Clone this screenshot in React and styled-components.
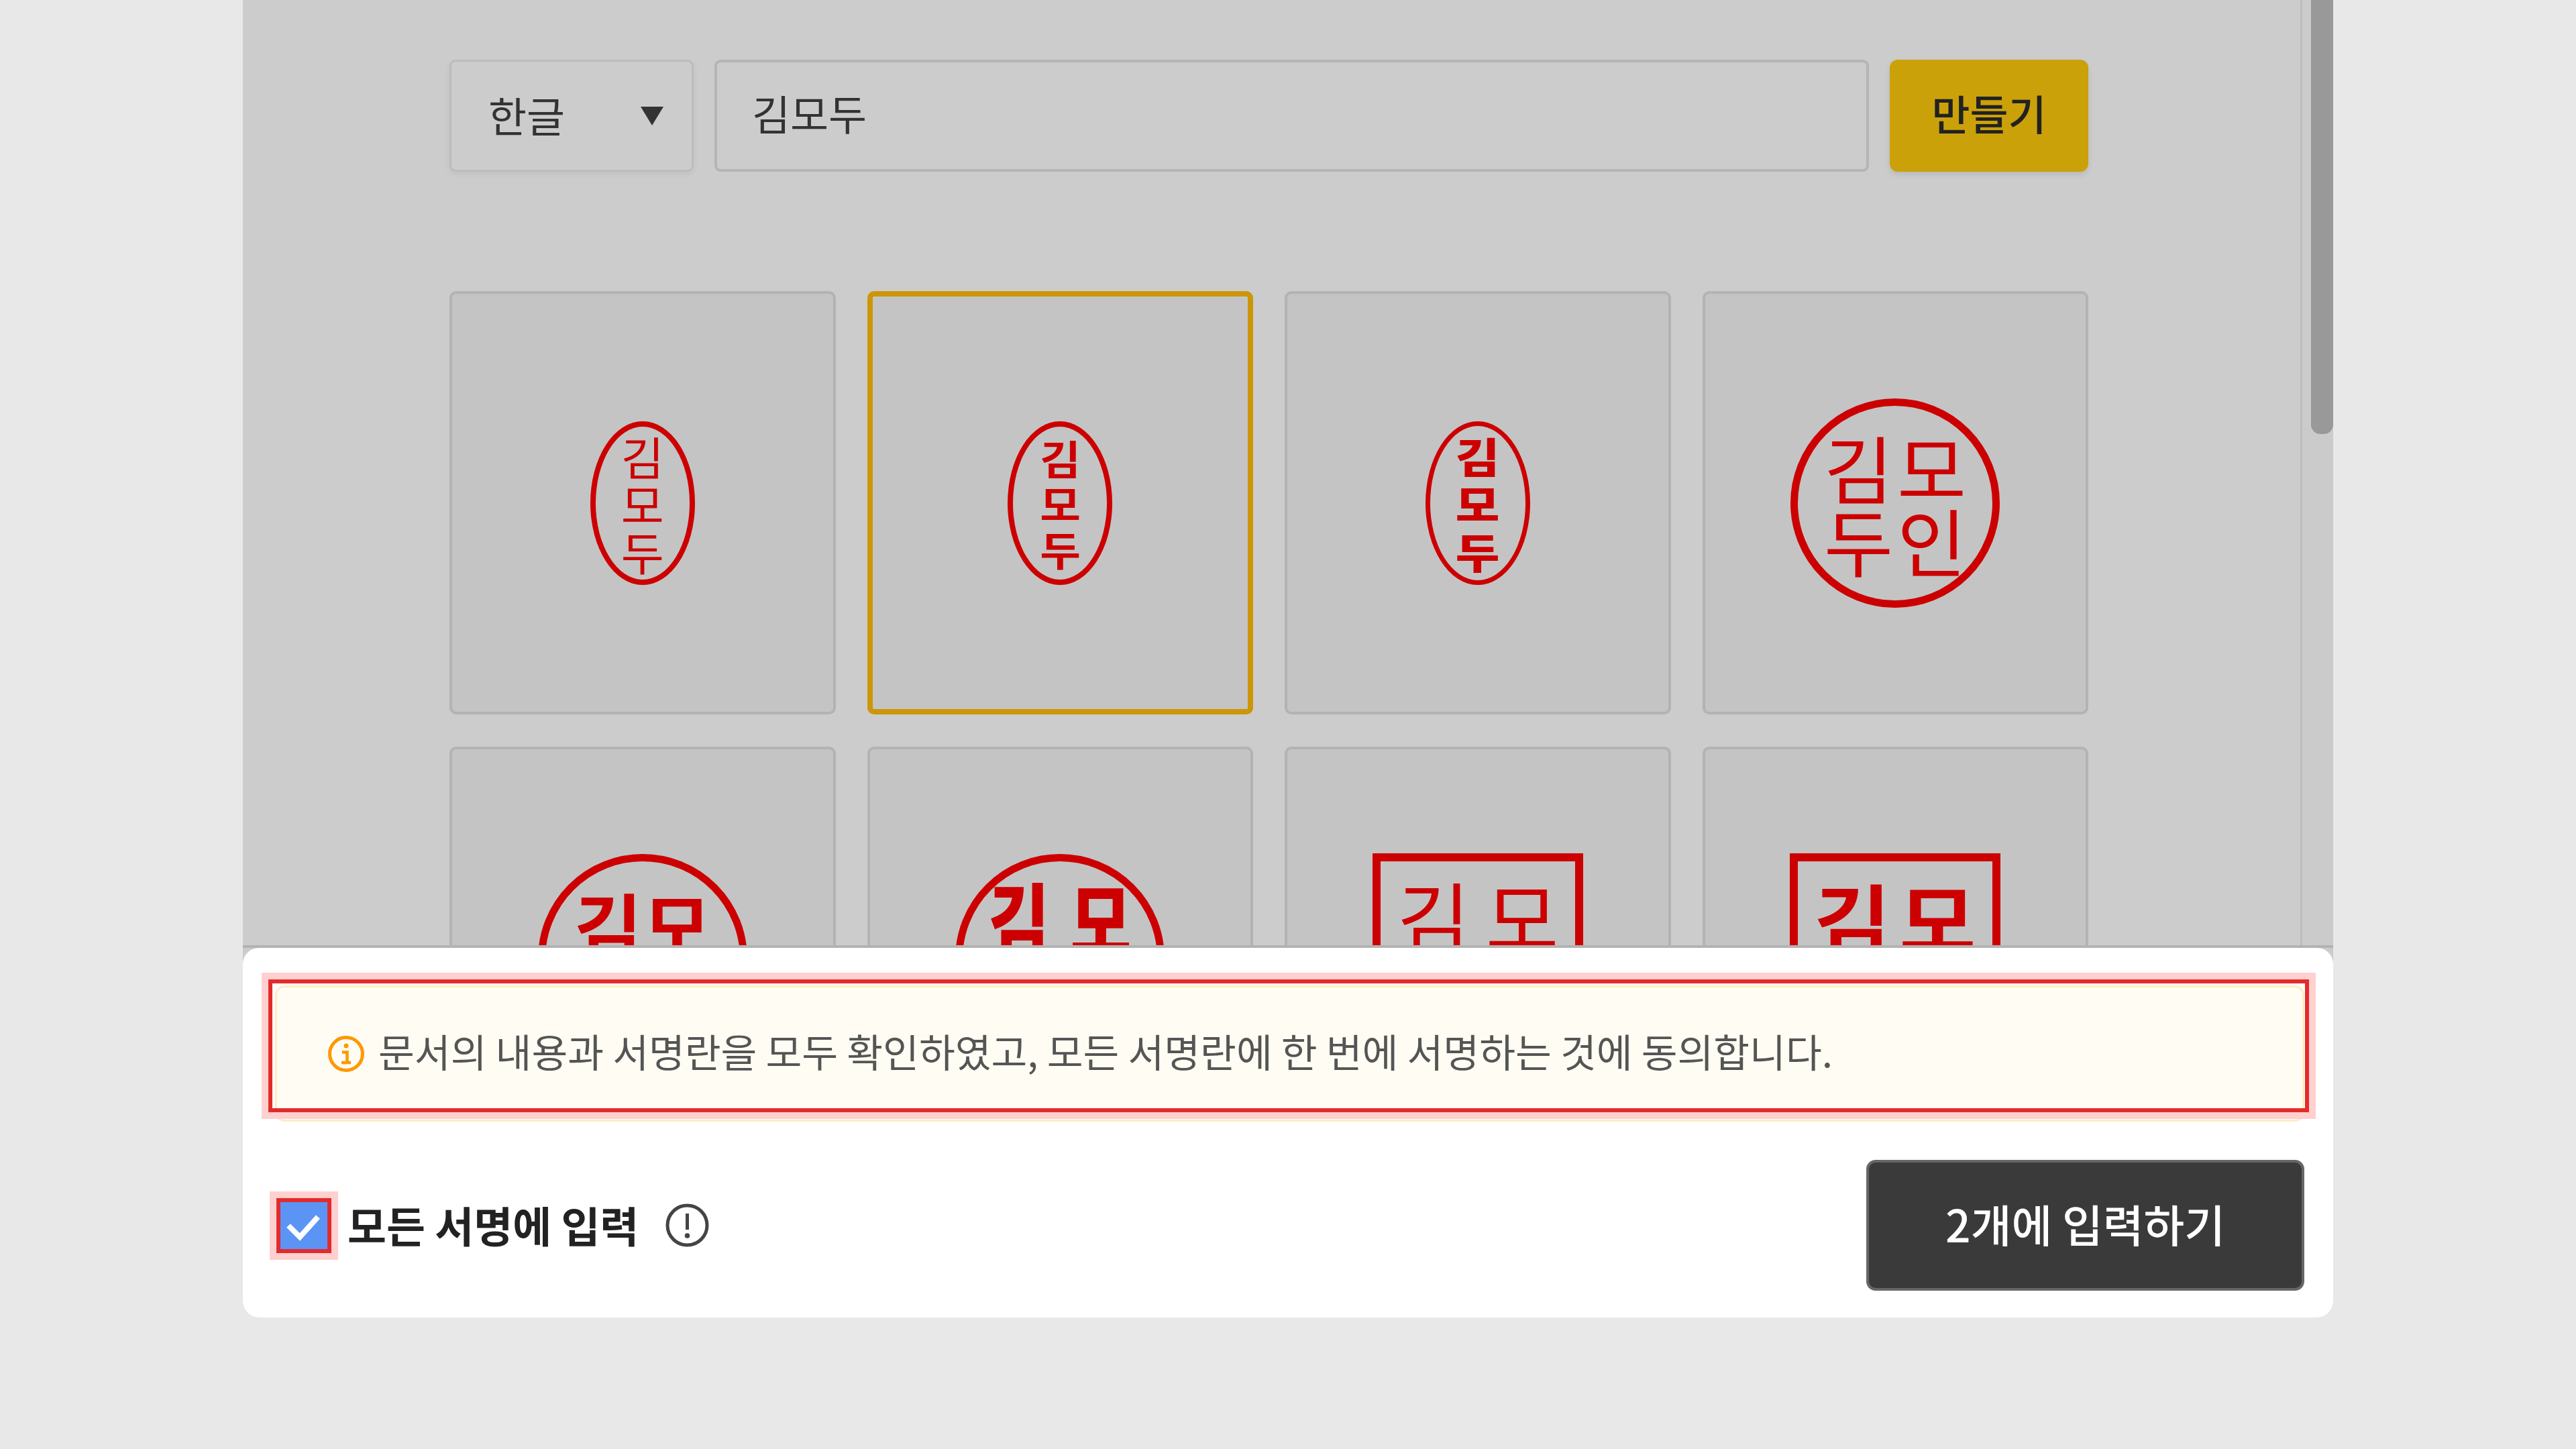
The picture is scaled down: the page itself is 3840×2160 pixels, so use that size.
import React from 'react';
import styled, {createGlobalStyle} from 'styled-components';

const GlobalStyle = createGlobalStyle`
  html, body {
    margin: 0;
    padding: 0;
    background: #e8e8e8;
  }
  * {
    box-sizing: border-box;
  }
  body {
    font-family: "Noto Sans CJK KR", "Noto Sans", sans-serif;
  }
`;

const Page = styled.div`
  width: 3840px;
  height: 2160px;
  background: #e8e8e8;
  overflow: hidden;
`;

const Dialog = styled.div`
  width: 3116px;
  height: 1964px;
  margin: 0 auto;
  display: flex;
  flex-direction: column;
`;

const Upper = styled.div`
  height: 1413px;
  flex: none;
  display: flex;
  background: #cccccc;
  border-bottom: 4px solid #b3b3b3;
  overflow: hidden;
`;

const Content = styled.div`
  flex: 1;
  min-width: 0;
  padding: 89px 316px 0 308px;
`;

const Track = styled.div`
  width: 49px;
  flex: none;
  display: flex;
  justify-content: flex-end;
  background: #cbcbcb;
  border-left: 3px solid #bdbdbd;
`;

const Thumb = styled.div`
  width: 33px;
  height: 647px;
  background: #999999;
  border-radius: 0 0 14px 14px;
`;

const Toolbar = styled.div`
  display: flex;
  gap: 31px;
  height: 167px;
`;

const Select = styled.div`
  width: 364px;
  flex: none;
  display: flex;
  align-items: center;
  justify-content: space-between;
  padding: 0 42px 0 55px;
  border: 3px solid #bcbcbc;
  border-radius: 9px;
  box-shadow: 0 4px 8px rgba(0, 0, 0, 0.06);
  color: #333333;
  font-size: 62px;
`;

const SelectLabel = styled.span`
  padding-bottom: 4px;
`;

const Caret = styled.span`
  width: 0;
  height: 0;
  border-left: 17px solid transparent;
  border-right: 17px solid transparent;
  border-top: 28px solid #333333;
`;

const NameInput = styled.input`
  flex: 1;
  min-width: 0;
  padding: 0 0 10px 52px;
  border: 4px solid #b5b5b5;
  border-radius: 9px;
  background: transparent;
  color: #333333;
  font-family: inherit;
  font-size: 62px;
  outline: none;
`;

const MakeButton = styled.button`
  width: 296px;
  flex: none;
  padding: 0 0 10px;
  border: none;
  border-radius: 12px;
  background: #cba10a;
  box-shadow: 0 4px 8px rgba(0, 0, 0, 0.1);
  color: #222222;
  font-family: inherit;
  font-size: 62px;
  font-weight: 500;
`;

const Grid = styled.div`
  margin-top: 178px;
  display: grid;
  grid-template-columns: repeat(4, 1fr);
  column-gap: 47px;
  row-gap: 48px;
`;

const Card = styled.div`
  height: 631px;
  display: flex;
  align-items: center;
  justify-content: center;
  background: #c4c4c4;
  border: ${props => (props.$selected ? '8px solid #cc9608' : '4px solid #b3b3b3')};
  border-radius: 10px;
`;

const shapes = {
  oval: 'width: 156px; height: 244px; border-radius: 50%;',
  circle: 'width: 312px; height: 312px; border-radius: 50%;',
  square: 'width: 314px; height: 314px;'
};

const Seal = styled.div`
  ${props => shapes[props.$shape]}
  flex: none;
  display: flex;
  align-items: center;
  justify-content: center;
  border: ${props => props.$stroke}px solid #cc0000;
  color: #cc0000;
`;

const Stack = styled.div`
  display: flex;
  flex-direction: column;
  align-items: center;
  gap: ${props => props.$gap}px;
`;

const Block = styled.div`
  display: grid;
  grid-template-columns: repeat(2, ${props => props.$cell}px);
  grid-template-rows: repeat(2, ${props => props.$cell}px);
  gap: ${props => props.$gap}px;
`;

const Glyph = styled.span`
  display: flex;
  align-items: center;
  justify-content: center;
  height: ${props => props.$height}px;
  font-size: ${props => props.$size}px;
  font-weight: ${props => props.$weight};
  line-height: 1;
  transform: scale(${props => props.$sx}, ${props => props.$sy});
`;

const BottomWrap = styled.div`
  flex: 1;
  min-height: 0;
  background: #cccccc;
  border-radius: 0 0 24px 24px;
`;

const Panel = styled.div`
  height: 100%;
  padding: 56px 43px 0 48px;
  background: #ffffff;
  border-radius: 24px;
`;

const NoticeWrap = styled.div`
  position: relative;
`;

const Notice = styled.div`
  height: 203px;
  display: flex;
  align-items: center;
  gap: 21px;
  padding: 0 0 0 76px;
  background: #fffdf3;
  border: 3px solid #fdecc8;
  border-radius: 14px;
  color: #555555;
  font-size: 58.5px;
`;

const NoticeText = styled.span`
  padding-bottom: 11px;
`;

const Highlight = styled.div`
  position: absolute;
  top: -9px;
  left: -10px;
  right: -7px;
  bottom: 14px;
  border: 6px solid #e32b2b;
  box-shadow: 0 0 0 10px #ffd0d0;
  pointer-events: none;
`;

const BottomRow = styled.div`
  margin-top: 57px;
  display: flex;
  align-items: center;
  justify-content: space-between;
`;

const AllSign = styled.label`
  display: flex;
  align-items: center;
  padding-left: 8px;
`;

const CheckBox = styled.span`
  width: 70px;
  height: 70px;
  flex: none;
  background: #5b94f5;
  box-shadow: 0 0 0 6px #e32b2b, 0 0 0 16px #ffd0d0;
`;

const AllSignText = styled.span`
  margin: 0 40px 0 30px;
  padding-bottom: 4px;
  color: #222222;
  font-size: 63px;
  font-weight: 700;
`;

const ApplyButton = styled.button`
  width: 653px;
  height: 195px;
  padding: 0 0 8px;
  background: #3a3a3a;
  border: 4px solid #666666;
  border-radius: 14px;
  color: #ffffff;
  font-family: inherit;
  font-size: 66px;
  font-weight: 500;
`;

const InfoIcon = () => (
  <svg width="54" height="54" viewBox="0 0 54 54" fill="none" style={{flex: 'none'}}>
    <circle cx="27" cy="27" r="24.5" stroke="#ff9800" strokeWidth="5" />
    <circle cx="27" cy="15" r="3.5" fill="#ff9800" />
    <path d="M21 24.5h7.5V39M20 40h14" stroke="#ff9800" strokeWidth="4.5" />
  </svg>
);

const AlertIcon = () => (
  <svg width="65" height="65" viewBox="0 0 65 65" fill="none">
    <circle cx="32.5" cy="32.5" r="29.5" stroke="#444444" strokeWidth="5" />
    <path d="M32.5 15v24" stroke="#444444" strokeWidth="5" />
    <circle cx="32.5" cy="48" r="3.8" fill="#444444" />
  </svg>
);

const CheckIcon = () => (
  <svg width="70" height="70" viewBox="0 0 70 70" fill="none" style={{display: 'block'}}>
    <path d="M12 35L29 52L56 22" stroke="#ffffff" strokeWidth="8" />
  </svg>
);

const NAME = ['김', '모', '두'];
const FOUR = ['김', '모', '두', '인'];
// lower half of these sits under the bottom panel
const TOP_ROW = ['김', '모'];

const seals = [
  {shape: 'oval', stroke: 8, layout: 'stack', chars: NAME, size: 58, weight: 400, sx: 1.2, sy: 1.18, height: 63, gap: 8},
  {shape: 'oval', stroke: 8, layout: 'stack', chars: NAME, size: 60, weight: 700, sx: 1.1, sy: 1, height: 58, gap: 10},
  {shape: 'oval', stroke: 7, layout: 'stack', chars: NAME, size: 62, weight: 900, sx: 1.15, sy: 1, height: 64, gap: 7},
  {shape: 'circle', stroke: 11, layout: 'block', chars: FOUR, size: 100, weight: 400, sx: 1.12, sy: 1.1, cell: 105, gap: 4},
  {shape: 'circle', stroke: 11, layout: 'block', chars: TOP_ROW, size: 100, weight: 700, sx: 1.1, sy: 1.1, cell: 99, gap: 4},
  {shape: 'circle', stroke: 11, layout: 'block', chars: TOP_ROW, size: 104, weight: 900, sx: 0.95, sy: 1.2, cell: 122, gap: 0},
  {shape: 'square', stroke: 12, layout: 'block', chars: TOP_ROW, size: 112, weight: 400, sx: 1.06, sy: 1.06, cell: 126, gap: 6},
  {shape: 'square', stroke: 12, layout: 'block', chars: TOP_ROW, size: 108, weight: 700, sx: 1.15, sy: 1.1, cell: 121, gap: 6}
];

const SealMark = ({seal}) => {
  const glyphs = seal.chars.map(char => (
    <Glyph
      key={char}
      $size={seal.size}
      $weight={seal.weight}
      $sx={seal.sx}
      $sy={seal.sy}
      $height={seal.layout === 'stack' ? seal.height : seal.cell}
    >
      {char}
    </Glyph>
  ));
  return (
    <Seal $shape={seal.shape} $stroke={seal.stroke}>
      {seal.layout === 'stack' ? (
        <Stack $gap={seal.gap}>{glyphs}</Stack>
      ) : (
        <Block $cell={seal.cell} $gap={seal.gap}>{glyphs}</Block>
      )}
    </Seal>
  );
};

export default function App() {
  return (
    <Page>
      <GlobalStyle />
      <Dialog>
        <Upper>
          <Content>
            <Toolbar>
              <Select>
                <SelectLabel>한글</SelectLabel>
                <Caret />
              </Select>
              <NameInput value="김모두" readOnly />
              <MakeButton>만들기</MakeButton>
            </Toolbar>
            <Grid>
              {seals.map((seal, index) => (
                <Card key={index} $selected={index === 1}>
                  <SealMark seal={seal} />
                </Card>
              ))}
            </Grid>
          </Content>
          <Track>
            <Thumb />
          </Track>
        </Upper>
        <BottomWrap>
          <Panel>
            <NoticeWrap>
              <Notice>
                <InfoIcon />
                <NoticeText>
                  문서의 내용과 서명란을 모두 확인하였고, 모든 서명란에 한 번에 서명하는 것에 동의합니다.
                </NoticeText>
              </Notice>
              <Highlight />
            </NoticeWrap>
            <BottomRow>
              <AllSign>
                <CheckBox>
                  <CheckIcon />
                </CheckBox>
                <AllSignText>모든 서명에 입력</AllSignText>
                <AlertIcon />
              </AllSign>
              <ApplyButton>2개에 입력하기</ApplyButton>
            </BottomRow>
          </Panel>
        </BottomWrap>
      </Dialog>
    </Page>
  );
}
